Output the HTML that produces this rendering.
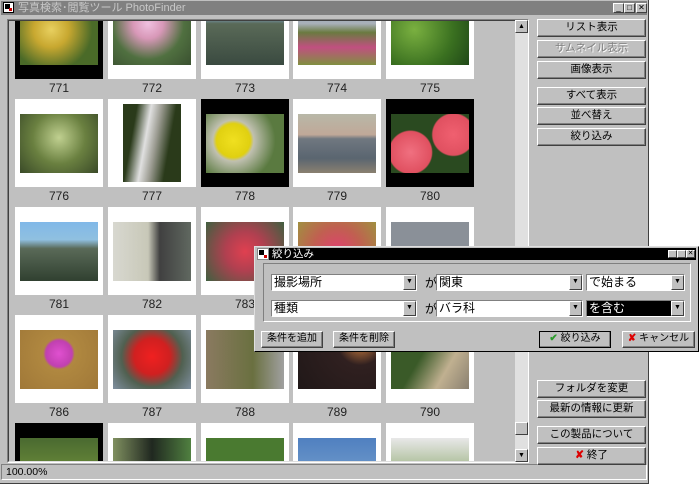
<!DOCTYPE html>
<html style="overflow:hidden;width:700px;height:484px"><head><meta charset="utf-8"><style>
*{margin:0;padding:0;box-sizing:border-box}
body{width:700px;height:484px;background:#fff;position:relative;overflow:hidden;font-family:"Liberation Sans","Noto Sans CJK JP",sans-serif;font-size:11px;color:#000}
.a{position:absolute}
.win{left:0;top:0;width:649px;height:484px;background:#c0c0c0;border-right:1px solid #404040;border-bottom:1px solid #404040;overflow:hidden}
.tb{left:1px;top:1px;width:646px;height:14px;background:#808080;color:#c8c8c8;font-size:11px;line-height:14px;padding-left:17px}
.tbb{top:3px;width:11px;height:10px;background:#c0c0c0;border:1px solid;border-color:#fff #404040 #404040 #fff;font-size:8px;line-height:8px;text-align:center;color:#000}
.list{left:7px;top:19px;width:522px;height:444px;border:1px solid;border-color:#808080 #fff #fff #808080;overflow:hidden}
.list .in{position:absolute;left:0;top:0;width:520px;height:442px;border:1px solid;border-color:#404040 #dfdfdf #dfdfdf #404040;overflow:hidden}
.cell{position:absolute;width:88px;height:88px;background:#fff}
.cell.k{background:#000}
.im{position:absolute;left:5px;top:15px;width:78px;height:59px}
.lbl{position:absolute;width:88px;text-align:center;font-size:12px;color:#222}
.btn{position:absolute;left:537px;width:109px;height:18px;background:#c0c0c0;border:1px solid;border-color:#fff #404040 #404040 #fff;box-shadow:inset -1px -1px #808080;text-align:center;line-height:15px;font-size:10.5px}
.dis{color:#808080;text-shadow:1px 1px #fff}
.sb{left:515px;top:20px;width:13px;height:442px;background:#e0e0e0}
.sbb{position:absolute;left:0;width:13px;height:13px;background:#c0c0c0;border:1px solid;border-color:#fff #404040 #404040 #fff;font-size:7px;text-align:center;line-height:11px}
.dlg{left:254px;top:246px;width:445px;height:106px;background:#c0c0c0;border:1px solid;border-color:#dfdfdf #000 #000 #dfdfdf}
.dtb{left:2px;top:1px;width:439px;height:12px;background:#000;color:#fff;font-size:10.5px;line-height:12px;padding-left:15px}
.grp{left:8px;top:16px;width:428px;height:59px;border:1px solid;border-color:#808080 #fff #fff #808080}
.cmb{position:absolute;height:17px;background:#fff;border:1px solid;border-color:#808080 #fff #fff #808080;font-size:12px;line-height:14px;padding-left:2px;overflow:hidden}
.cmb .ar{position:absolute;right:0;top:0;width:13px;height:15px;background:#c0c0c0;border:1px solid;border-color:#fff #404040 #404040 #fff;font-size:7px;text-align:center;line-height:12px}
.ga{position:absolute;font-size:12px}
.db{position:absolute;top:84px;height:17px;background:#c0c0c0;border:1px solid;border-color:#fff #404040 #404040 #fff;box-shadow:inset -1px -1px #808080;font-size:10px;text-align:center;line-height:14px}
</style></head><body>
<div class="a win">
<div class="a tb">写真検索･閲覧ツール PhotoFinder</div>
<div class="a" style="left:3px;top:2px;width:11px;height:11px;background:#fff;border:1px solid #000"><div style="position:absolute;left:1px;top:1px;width:5px;height:5px;background:#000"></div><div style="position:absolute;right:1px;bottom:1px;width:3px;height:3px;background:#c00"></div></div>
<div class="a tbb" style="left:613px">_</div><div class="a tbb" style="left:624px">□</div><div class="a tbb" style="left:636px">✕</div>
<div class="a list"><div class="in">
<div class="cell k" style="left:6px;top:-30px"><div class="im" style="background:radial-gradient(circle at 40% 40%,#e8d060 0,#c8a830 30%,#4a6a28 70%)"></div></div>
<div class="cell" style="left:99px;top:-30px"><div class="im" style="background:radial-gradient(circle at 45% 30%,#f0c0e0 0,#d898b8 25%,#507040 60%,#3a5030)"></div></div>
<div class="cell" style="left:192px;top:-30px"><div class="im" style="background:linear-gradient(#80a8d0 0,#80a8d0 18%,#5a6a58 30%,#3a4a40)"></div></div>
<div class="cell" style="left:284px;top:-30px"><div class="im" style="background:linear-gradient(#a0b0c8 0,#a8b0b8 30%,#6a7a40 45%,#c05080 70%,#809040)"></div></div>
<div class="cell" style="left:377px;top:-30px"><div class="im" style="background:radial-gradient(circle at 30% 40%,#7ab040 0,#3a7020 60%,#204818)"></div></div>
<div class="lbl" style="left:6px;top:60px">771</div><div class="lbl" style="left:99px;top:60px">772</div><div class="lbl" style="left:192px;top:60px">773</div><div class="lbl" style="left:284px;top:60px">774</div><div class="lbl" style="left:377px;top:60px">775</div>

<div class="cell" style="left:6px;top:78px"><div class="im" style="background:radial-gradient(circle at 50% 40%,#c0d090 0,#6a8040 50%,#3a4a28)"></div></div>
<div class="cell" style="left:99px;top:78px"><div class="im" style="left:15px;top:5px;width:58px;height:78px;background:linear-gradient(100deg,#2a3a1a 20%,#e0e0e0 40%,#9a9a90 55%,#2a3a1a 75%)"></div></div>
<div class="cell k" style="left:192px;top:78px"><div class="im" style="background:radial-gradient(circle at 35% 45%,#f0e020 0,#e0d010 28%,#c0c0b0 34%,#5a7a40 70%)"></div></div>
<div class="cell" style="left:284px;top:78px"><div class="im" style="background:linear-gradient(#b8b8a8 0,#c0a898 35%,#707880 42%,#5a6570 75%,#8a8070)"></div></div>
<div class="cell k" style="left:377px;top:78px"><div class="im" style="background:radial-gradient(circle at 25% 65%,#f07080 0,#e05060 30%,transparent 32%),radial-gradient(circle at 80% 35%,#f06070 0,#e05060 28%,transparent 30%),#2a4a20"></div></div>
<div class="lbl" style="left:6px;top:168px">776</div><div class="lbl" style="left:99px;top:168px">777</div><div class="lbl" style="left:192px;top:168px">778</div><div class="lbl" style="left:284px;top:168px">779</div><div class="lbl" style="left:377px;top:168px">780</div>

<div class="cell" style="left:6px;top:186px"><div class="im" style="background:linear-gradient(#80b8e8 0,#90c0e0 30%,#5a6a58 45%,#304030)"></div></div>
<div class="cell" style="left:99px;top:186px"><div class="im" style="background:linear-gradient(90deg,#d8d8d0 0,#c8c8b8 45%,#404040 60%,#606860 100%)"></div></div>
<div class="cell" style="left:192px;top:186px"><div class="im" style="background:radial-gradient(circle at 50% 50%,#e04050 0,#b04050 40%,#406040)"></div></div>
<div class="cell" style="left:284px;top:186px"><div class="im" style="background:radial-gradient(circle,#e04070 0,#c06050 50%,#a09040)"></div></div>
<div class="cell" style="left:377px;top:186px"><div class="im" style="background:#8a9098"></div></div>
<div class="lbl" style="left:6px;top:276px">781</div><div class="lbl" style="left:99px;top:276px">782</div><div class="lbl" style="left:192px;top:276px">783</div>

<div class="cell" style="left:6px;top:294px"><div class="im" style="background:radial-gradient(circle at 50% 40%,#e050d0 0,#c040b0 25%,#b08840 30%,#a07838)"></div></div>
<div class="cell" style="left:99px;top:294px"><div class="im" style="background:radial-gradient(circle at 50% 45%,#f02020 0,#d02020 35%,#506050 60%,#8090a0)"></div></div>
<div class="cell" style="left:192px;top:294px"><div class="im" style="background:linear-gradient(90deg,#8a7a60,#6a7040 60%,#a0a0a0)"></div></div>
<div class="cell" style="left:284px;top:294px"><div class="im" style="background:radial-gradient(circle at 80% 20%,#d08040 0,#302020 30%,#201818)"></div></div>
<div class="cell" style="left:377px;top:294px"><div class="im" style="background:linear-gradient(120deg,#3a5a28 40%,#c0b090 70%,#8a8070)"></div></div>
<div class="lbl" style="left:6px;top:384px">786</div><div class="lbl" style="left:99px;top:384px">787</div><div class="lbl" style="left:192px;top:384px">788</div><div class="lbl" style="left:284px;top:384px">789</div><div class="lbl" style="left:377px;top:384px">790</div>

<div class="cell k" style="left:6px;top:402px"><div class="im" style="background:linear-gradient(#4a6a30,#80a040)"></div></div>
<div class="cell" style="left:99px;top:402px"><div class="im" style="background:linear-gradient(90deg,#809060,#202820 50%,#508040)"></div></div>
<div class="cell" style="left:192px;top:402px"><div class="im" style="background:#4a7a30"></div></div>
<div class="cell" style="left:284px;top:402px"><div class="im" style="background:linear-gradient(#5080c0,#80a8d0)"></div></div>
<div class="cell" style="left:377px;top:402px"><div class="im" style="background:linear-gradient(#e8e8e8,#6a9040)"></div></div>
</div></div>
<div class="a sb"><div class="sbb" style="top:0">▲</div><div class="sbb" style="top:402px"></div><div class="sbb" style="top:429px">▼</div></div>
<div class="a" style="left:1px;top:464px;width:646px;height:16px;border:1px solid;border-color:#808080 #fff #fff #808080;font-size:10.5px;line-height:14px;padding-left:4px">100.00%</div>

<div class="btn" style="top:19px">リスト表示</div>
<div class="btn dis" style="top:40px">サムネイル表示</div>
<div class="btn" style="top:61px">画像表示</div>
<div class="btn" style="top:87px">すべて表示</div>
<div class="btn" style="top:107px">並べ替え</div>
<div class="btn" style="top:128px">絞り込み</div>
<div class="btn" style="top:380px">フォルダを変更</div>
<div class="btn" style="top:400px">最新の情報に更新</div>
<div class="btn" style="top:426px">この製品について</div>
<div class="btn" style="top:447px"><span style="color:#d00;font-weight:bold">✘</span> 終了</div>
</div>

<div class="a dlg">
<div class="a dtb">絞り込み</div>
<div class="a" style="left:2px;top:1px;width:12px;height:12px;background:#fff;border:1px solid #888"><div style="position:absolute;left:1px;top:1px;width:5px;height:5px;background:#000"></div><div style="position:absolute;right:1px;bottom:1px;width:3px;height:3px;background:#c00"></div></div>
<div class="a tbb" style="left:413px;top:3px;width:9px;height:8px"></div><div class="a tbb" style="left:422px;top:3px;width:9px;height:8px"></div><div class="a tbb" style="left:431px;top:3px;width:9px;height:8px;font-size:7px;line-height:6px">✕</div>
<div class="a grp"></div>
<div class="cmb" style="left:16px;top:27px;width:146px">撮影場所<div class="ar">▼</div></div>
<div class="ga" style="left:170px;top:27px">が</div>
<div class="cmb" style="left:181px;top:27px;width:147px">関東<div class="ar">▼</div></div>
<div class="cmb" style="left:331px;top:27px;width:99px">で始まる<div class="ar">▼</div></div>
<div class="cmb" style="left:16px;top:53px;width:146px">種類<div class="ar">▼</div></div>
<div class="ga" style="left:170px;top:53px">が</div>
<div class="cmb" style="left:181px;top:53px;width:147px">バラ科<div class="ar">▼</div></div>
<div class="cmb" style="left:331px;top:53px;width:99px;background:#000;color:#fff">を含む<div class="ar" style="color:#000">▼</div></div>
<div class="db" style="left:6px;width:62px">条件を追加</div>
<div class="db" style="left:78px;width:62px">条件を削除</div>
<div class="db" style="left:284px;width:72px;border:1px solid #000"><span style="color:#2a9a2a;font-weight:bold">✔</span> 絞り込み</div>
<div class="db" style="left:367px;width:73px"><span style="color:#d00;font-weight:bold">✘</span> キャンセル</div>
</div>
</body></html>
